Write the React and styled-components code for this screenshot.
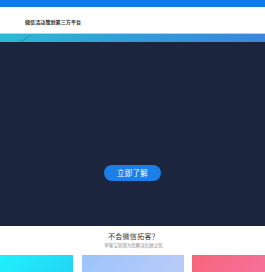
import React from "react";
import styled, { createGlobalStyle } from "styled-components";

const Global = createGlobalStyle`
  html, body { margin: 0; padding: 0; background: #fff; }
  body { font-family: "Noto Sans CJK SC", "Noto Sans", sans-serif; overflow: hidden; }
`;

const Page = styled.div`
  width: 265px;
  height: 272px;
  overflow: hidden;
  display: flex;
  flex-direction: column;
`;

const TopBar = styled.div`
  height: 7px;
  background: #0b7ce9;
  flex: none;
`;

const Header = styled.header`
  height: 26px;
  flex: none;
  display: flex;
  align-items: center;
  padding-left: 25px;
  padding-top: 2px;
  box-sizing: border-box;
  background: #fff;
`;

const Brand = styled.span`
  font-size: 5px;
  font-weight: 700;
  color: #2a2a2a;
  letter-spacing: 0.1px;
`;

const Strip = styled.div`
  position: relative;
  height: 9px;
  flex: none;
  border-top: 1px solid #9fd9ee;
  box-sizing: border-box;
  background: linear-gradient(90deg, #2bbad3 0%, #3399d8 55%, #3b86dc 100%);
  overflow: hidden;
`;

const Deco = styled.svg`
  position: absolute;
  left: 0;
  top: 0;
`;

const Hero = styled.section`
  height: 184px;
  flex: none;
  background: #1b263e;
  display: flex;
  justify-content: center;
  align-items: flex-start;
  padding-top: 123px;
  box-sizing: border-box;
`;

const Button = styled.button`
  width: 57px;
  height: 16px;
  border: none;
  border-radius: 8px;
  background: #1a7fe8;
  color: #fff;
  font-family: inherit;
  font-size: 7.5px;
  padding: 0;
  line-height: 16px;
  letter-spacing: 0.3px;
`;

const Intro = styled.section`
  display: flex;
  flex-direction: column;
  align-items: center;
  padding-top: 6px;
  padding-left: 2px;
`;

const Title = styled.h2`
  margin: 0;
  font-size: 7px;
  font-weight: 400;
  color: #3a3a3a;
  line-height: 9px;
  letter-spacing: 0.3px;
`;

const Sub = styled.p`
  margin: 1px 0 0;
  font-size: 4.5px;
  color: #8a8a8a;
  line-height: 6px;
`;

const Cards = styled.div`
  margin-top: 7px;
  display: grid;
  grid-template-columns: 73px 102px 73px;
  column-gap: 8.5px;
  height: 20px;
`;

const Card = styled.div`
  background: ${(p) => p.$bg};
`;

export default function App() {
  return (
    <Page>
      <Global />
      <TopBar />
      <Header>
        <Brand>微信活动策划第三方平台</Brand>
      </Header>
      <Strip>
        <Deco width="265" height="9" viewBox="0 0 265 9">
          <line x1="19" y1="9" x2="31" y2="1" stroke="#25527a" strokeWidth="0.4" />
          <circle cx="104" cy="9" r="1.6" fill="#2e76c0" />
        </Deco>
      </Strip>
      <Hero>
        <Button>立即了解</Button>
      </Hero>
      <Intro>
        <Title>不会微信拓客？</Title>
        <Sub>单客宝营销为您解决后顾之忧</Sub>
      </Intro>
      <Cards>
        <Card $bg="linear-gradient(135deg, #1ff0fd 0%, #23d6f4 100%)" />
        <Card $bg="linear-gradient(135deg, #9cc3fb 0%, #b9ccf7 100%)" />
        <Card $bg="linear-gradient(135deg, #f8657a 0%, #f5709a 100%)" />
      </Cards>
    </Page>
  );
}
